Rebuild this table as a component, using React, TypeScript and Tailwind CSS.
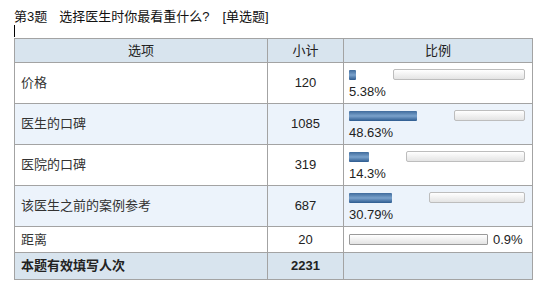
const font = "font-['Liberation_Sans','Noto_Sans_CJK_SC',sans-serif]"

type Row = { label: string; count: number; pct: number; text: string }

const rows: Row[] = [
    { label: '价格', count: 120, pct: 5.38, text: '5.38%' },
    { label: '医生的口碑', count: 1085, pct: 48.63, text: '48.63%' },
    { label: '医院的口碑', count: 319, pct: 14.3, text: '14.3%' },
    { label: '该医生之前的案例参考', count: 687, pct: 30.79, text: '30.79%' },
    { label: '距离', count: 20, pct: 0.9, text: '0.9%' },
]

const FULL = 139

function Bar({ pct, text }: { pct: number; text: string }) {
    const blue = Math.round((pct / 100) * FULL)
    if (blue < 2) {
        return (
            <div className="flex items-center h-[25px]">
                <div className="h-[11px] w-[139px] border border-[#9a9a9a] rounded-[1px] bg-linear-to-b from-white to-[#e3e3e3]" />
                <span className="ml-[5px] text-[13px] leading-none">{text}</span>
            </div>
        )
    }
    return (
        <div className="pt-[6px] h-[40px]">
            <div className="flex items-center h-[11px]">
                <div
                    className="h-[10px] rounded-[1px] bg-linear-to-b from-[#3f6b9c] via-[#7aa2cc] to-[#2d5b8f]"
                    style={{ width: blue }}
                />
                <div
                    className="ml-[37px] h-[11px] border border-[#bdbdbd] rounded-[2px] bg-linear-to-b from-white to-[#e4e4e4]"
                    style={{ width: FULL - blue }}
                />
            </div>
            <div className="mt-[4px] text-[13px] leading-[16px]">{text}</div>
        </div>
    )
}

export default function App() {
    return (
        <div className={`${font} bg-white w-[554px] h-[293px] text-[#222]`}>
            <div className="flex pl-[14px] pt-[9px] text-[13px] leading-[16px] text-[#111]">
                <span>第3题</span>
                <span className="ml-[12px]">选择医生时你最看重什么?</span>
                <span className="ml-[13px]">[单选题]</span>
            </div>
            <div className="ml-[14px] w-px h-[12px] bg-black" />
            <table className="ml-[14px] mt-[1px] border-collapse w-[518px] text-[13px] table-fixed">
                <colgroup>
                    <col className="w-[253px]" />
                    <col className="w-[76px]" />
                    <col className="w-[189px]" />
                </colgroup>
                <thead>
                    <tr className="bg-[#d8e4ee] h-[24px]">
                        <th className="border border-[#a3a3a3] font-normal text-center p-0">选项</th>
                        <th className="border border-[#a3a3a3] font-normal text-center p-0">小计</th>
                        <th className="border border-[#a3a3a3] font-normal text-center p-0">比例</th>
                    </tr>
                </thead>
                <tbody>
                    {rows.map((r, i) => (
                        <tr
                            key={r.label}
                            className={`${i % 2 === 1 ? 'bg-[#ecf3fb]' : 'bg-white'} ${i === 4 ? 'h-[26px]' : 'h-[41px]'}`}
                        >
                            <td className="border border-[#a3a3a3] pl-[6px] p-0 text-[#333]">{r.label}</td>
                            <td className="border border-[#a3a3a3] text-center p-0">{r.count}</td>
                            <td className="border border-[#a3a3a3] pl-[5px] p-0 align-top">
                                <Bar pct={r.pct} text={r.text} />
                            </td>
                        </tr>
                    ))}
                    <tr className="bg-[#d8e4ee] h-[27px]">
                        <td className="border border-[#a3a3a3] pl-[6px] p-0 font-bold">本题有效填写人次</td>
                        <td className="border border-[#a3a3a3] text-center p-0 font-bold">2231</td>
                        <td className="border border-[#a3a3a3] p-0" />
                    </tr>
                </tbody>
            </table>
        </div>
    )
}
